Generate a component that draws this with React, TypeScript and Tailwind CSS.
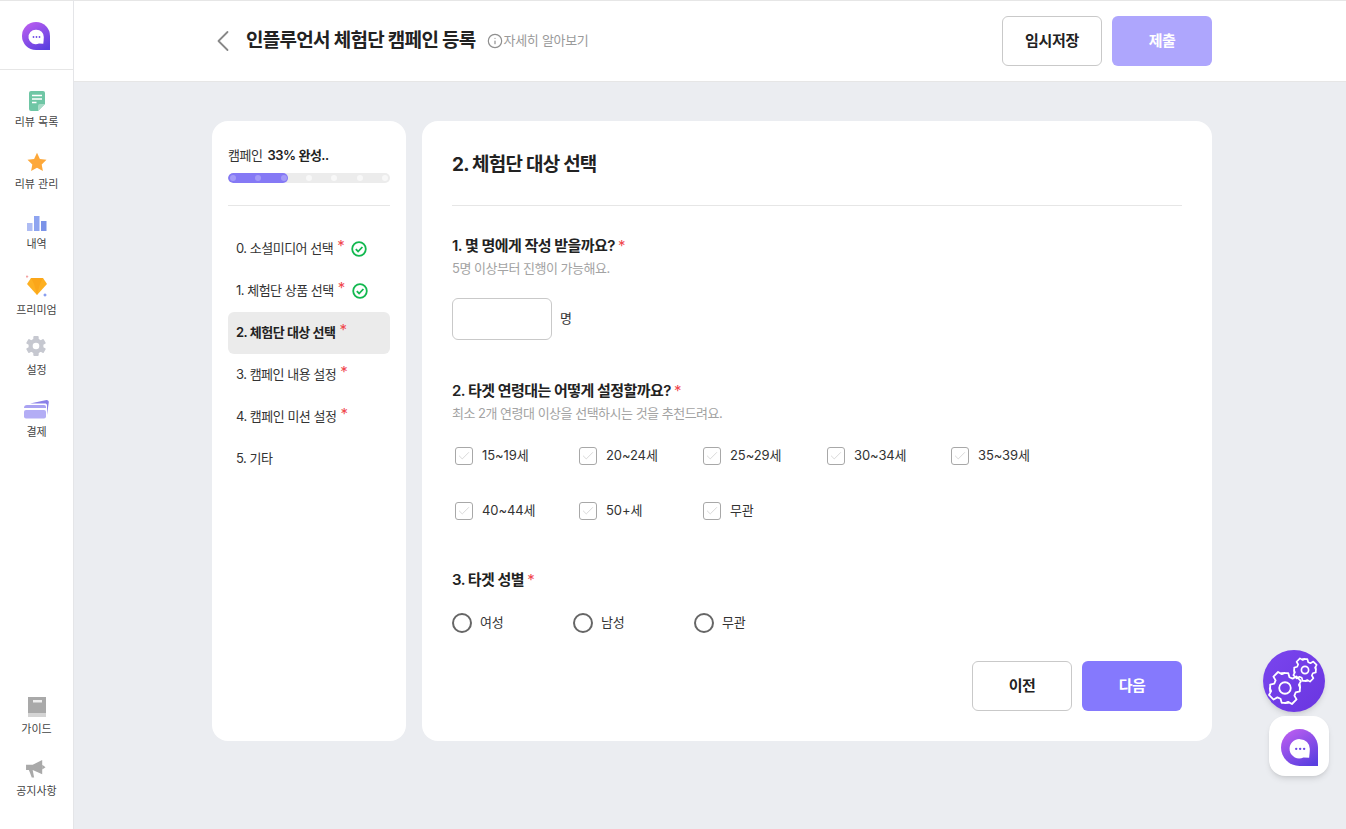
import { ChevronLeft, Info, Check } from 'lucide-react';

// ─── DATA ───

const steps = [
  { label: '0. 소셜미디어 선택', required: true, done: true },
  { label: '1. 체험단 상품 선택', required: true, done: true },
  { label: '2. 체험단 대상 선택', required: true, active: true },
  { label: '3. 캠페인 내용 설정', required: true },
  { label: '4. 캠페인 미션 설정', required: true },
  { label: '5. 기타' },
];

const ageRows = [
  ['15~19세', '20~24세', '25~29세', '30~34세', '35~39세'],
  ['40~44세', '50+세', '무관'],
];

const genders = ['여성', '남성', '무관'];

// ─── ICONS ───

function BrandLogo({ className }: { className?: string }) {
  return (
    <svg viewBox="0 0 28 28" className={className}>
      <defs>
        <linearGradient id="brand" x1="0.2" y1="0" x2="0.8" y2="1">
          <stop offset="0" stopColor="#bb5ef0" />
          <stop offset="1" stopColor="#5a3fe0" />
        </linearGradient>
      </defs>
      <path d="M14 0a14 14 0 0 1 14 14v14H14A14 14 0 0 1 14 0z" fill="url(#brand)" />
      <path d="M14.500 7.700a7.300 7.300 0 0 1 7.300 7.300c0 2.500-.3 4.600-.5 6.800l-4.300-.3a7.300 7.300 0 1 1-2.500-13.800z" fill="#fff" />
      <circle cx="11.500" cy="15" r=".9" fill="#6d4ae6" />
      <circle cx="14.500" cy="15" r=".9" fill="#6d4ae6" />
      <circle cx="17.500" cy="15" r=".9" fill="#6d4ae6" />
    </svg>
  );
}

function NoteIcon() {
  return (
    <svg viewBox="0 0 16 20" className="w-4 h-5 mb-[-1px]">
      <path d="M2 0h12a2 2 0 0 1 2 2v11l-7 7H2a2 2 0 0 1-2-2V2a2 2 0 0 1 2-2z" fill="#6fc6a5" />
      <path d="M16 13h-5a2 2 0 0 0-2 2v5z" fill="#a9dcc8" />
      <path d="M3 4.500h10M3 8h10M3 11.500h4.500" stroke="#fff" strokeWidth="1.600" />
    </svg>
  );
}

function StarIcon() {
  return (
    <svg viewBox="0 0 20 20" className="w-5 h-5">
      <path d="M10 .8l2.900 6.100 6.600.9-4.800 4.600 1.200 6.600L10 15.800 4.100 19l1.200-6.600L.5 7.800l6.600-.9z" fill="#fda83a" />
    </svg>
  );
}

function BarsIcon() {
  return (
    <svg viewBox="0 0 20 15" className="w-5 h-[15px] mb-px">
      <rect x="0" y="7" width="5.500" height="8" fill="#aebcf3" />
      <rect x="7" y="0" width="5.500" height="15" fill="#8ea4f0" />
      <rect x="14" y="5" width="5.500" height="10" fill="#7b93e8" />
    </svg>
  );
}

function GemIcon() {
  return (
    <svg viewBox="0 0 22 23" className="w-[22px] h-[23px]">
      <path d="M5 3h12l4 6-10 11L1 9z" fill="#fdb022" />
      <path d="M5 3l3 6h6l3-6zM8 9l3 11 3-11z" fill="#fba61a" />
      <path d="M1 0l.6 1 1 .6-1 .6-.6 1-.6-1-1-.6 1-.6z" fill="#f4a0a0" />
      <path d="M19 18l.7 1.300 1.300.7-1.300.7-.7 1.300-.7-1.300-1.300-.7 1.300-.7z" fill="#7b93ee" />
    </svg>
  );
}

function CogIcon() {
  return (
    <svg viewBox="0 0 20 20" className="w-5 h-5 mb-[2px] -ml-px">
      <g fill="#c6c8d0">
        <circle cx="10" cy="10" r="7.500" />
        {[0, 60, 120, 180, 240, 300].map((deg) => (
          <rect key={deg} x="7.300" y="0" width="5.400" height="5" rx="1" transform={`rotate(${deg} 10 10)`} />
        ))}
      </g>
      <circle cx="10" cy="10" r="3.300" fill="#fff" />
    </svg>
  );
}

function CardIcon() {
  return (
    <svg viewBox="0 0 25 19" className="w-[25px] h-[19px] mb-px">
      <path d="M6 3.500L22.500 0c1.500 0 2.500 1 2.300 2.300L23 15V5.500C23 4 22 3.500 21 3.500z" fill="#8a80e8" />
      <path d="M0 8a3 3 0 0 1 3-3h17a2 2 0 0 1 2 2v1H0z" fill="#a9a2f2" />
      <rect x="0" y="10" width="22" height="8.500" rx="2" fill="#b3adf5" />
    </svg>
  );
}

function BookIcon() {
  return (
    <svg viewBox="0 0 18 20" className="w-[18px] h-5">
      <rect x="0" y="0" width="18" height="20" fill="#a9a9a9" />
      <rect x="0" y="16" width="18" height="4" fill="#d4d4d4" />
      <rect x="5" y="3" width="9" height="2.500" fill="#eeeeee" />
    </svg>
  );
}

function MegaphoneIcon() {
  return (
    <svg viewBox="0 0 22 20" className="w-[21px] h-[19px]">
      <path d="M0 5h7l10-5v15L7 10.500H0z" fill="#a9a9a9" />
      <path d="M17 5l3.500 2.500L17 10z" fill="#a9a9a9" />
      <path d="M3 10.500h4l1.500 8H6z" fill="#a9a9a9" />
    </svg>
  );
}

function GearsIcon() {
  const gear =
    'M-2-9h4l.7 2.500 1.900.8 2.300-1.300 2.800 2.800-1.300 2.300.8 1.900L9-2v4l-2.500.7-.8 1.900 1.300 2.300-2.800 2.800-2.300-1.300-1.900.8L2 9h-4l-.7-2.500-1.900-.8-2.300 1.300-2.800-2.800 1.300-2.300-.8-1.900L-9 2v-4l2.500-.7.8-1.900-1.300-2.300 2.800-2.800 2.300 1.300 1.900-.8z';
  return (
    <svg viewBox="0 0 62 62" className="w-[62px] h-[62px]">
      <g fill="none" stroke="#fff" strokeLinejoin="round">
        <g transform="translate(22 38) scale(1.650)">
          <path d={gear} strokeWidth="1.100" />
          <circle r="3.500" strokeWidth="1.100" />
        </g>
        <g transform="translate(42 20) scale(1.200)">
          <path d={gear} strokeWidth="1.400" />
          <circle r="3" strokeWidth="1.400" />
        </g>
      </g>
    </svg>
  );
}

function DoneBadge() {
  return (
    <svg viewBox="0 0 16 16" className="w-4 h-4 shrink-0">
      <circle cx="8" cy="8" r="6.800" fill="none" stroke="#12b84f" strokeWidth="1.800" />
      <path d="M4.800 8.200l2.300 2.300 4.300-4.500" fill="none" stroke="#12b84f" strokeWidth="1.800" />
    </svg>
  );
}

// ─── PIECES ───

function NavItem({ icon, label, box }: { icon: React.ReactNode; label: string; box: string }) {
  return (
    <div className={`flex flex-col items-center justify-end ${box}`}>
      {icon}
      <span className="mt-1 text-[11px] leading-[16px] text-[#444]">{label}</span>
    </div>
  );
}

function Asterisk({ className = '' }: { className?: string }) {
  return <span className={`text-[#f0484e] font-normal ${className}`}>*</span>;
}

function AgeCheck({ label }: { label: string }) {
  return (
    <label className="w-[124px] flex items-center h-5">
      <span className="w-[18px] h-[18px] ml-[3px] rounded-[3px] border border-[#a8a8a8] bg-white flex items-center justify-center">
        <Check className="w-3.5 h-3.5 text-[#d4d4d4]" strokeWidth={1.500} />
      </span>
      <span className="ml-[9px] text-[13px] text-[#333] tracking-[-0.1px]">{label}</span>
    </label>
  );
}

function QuestionTitle({ children }: { children: React.ReactNode }) {
  return (
    <div className="text-[15px] leading-[22px] font-semibold text-[#222] tracking-[-0.55px]">
      {children} <Asterisk />
    </div>
  );
}

// ─── PAGE ───

export default function App() {
  return (
    <div className="relative flex h-[829px] w-full overflow-hidden bg-[#ebedf1] font-['Inter','Noto_Sans_CJK_KR',sans-serif]">
      {/* Sidebar */}
      <aside className="w-[74px] shrink-0 flex flex-col bg-white border-r border-[#e4e5e8]">
        <div className="h-[70px] shrink-0 flex items-center justify-center border-b border-t border-[#e6e6e6]">
          <BrandLogo className="w-7 h-7 mt-[2px] -ml-px" />
        </div>
        <NavItem box="h-[60px]" icon={<NoteIcon />} label="리뷰 목록" />
        <NavItem box="h-[62px]" icon={<StarIcon />} label="리뷰 관리" />
        <NavItem box="h-[60px]" icon={<BarsIcon />} label="내역" />
        <NavItem box="h-[66px]" icon={<GemIcon />} label="프리미엄" />
        <NavItem box="h-[60px]" icon={<CogIcon />} label="설정" />
        <NavItem box="h-[62px]" icon={<CardIcon />} label="결제" />
        <div className="flex-1" />
        <NavItem box="h-[40px]" icon={<BookIcon />} label="가이드" />
        <NavItem box="h-[62px] mb-[30px]" icon={<MegaphoneIcon />} label="공지사항" />
      </aside>

      <div className="flex-1 min-w-0 flex flex-col">
        {/* Header */}
        <header className="h-[82px] shrink-0 bg-white border-t border-b border-[#e6e6e6] pl-[138px] pr-[134px] flex items-center">
          <ChevronLeft className="w-9 h-9 -ml-[7px] text-[#888]" strokeWidth={1.200} />
          <h1 className="ml-[5px] text-[19px] font-bold text-[#222] tracking-[-0.7px]">인플루언서 체험단 캠페인 등록</h1>
          <Info className="ml-[11px] w-4 h-4 text-[#8f8f8f]" strokeWidth={1.800} />
          <span className="ml-[1px] text-[13px] text-[#9a9a9a] tracking-[-0.3px]">자세히 알아보기</span>
          <div className="ml-auto flex gap-[10px]">
            <button className="w-[100px] h-[50px] rounded-[6px] border border-[#c9c9c9] bg-white text-[15px] font-semibold text-[#222] tracking-[-0.3px]">
              임시저장
            </button>
            <button className="w-[100px] h-[50px] rounded-[6px] bg-[#aea6fd] text-[15px] font-semibold text-white tracking-[-0.5px]">
              제출
            </button>
          </div>
        </header>

        {/* Content */}
        <main className="flex gap-4 pl-[138px] pt-[39px]">
          {/* Steps */}
          <section className="w-[194px] h-[620px] bg-white rounded-[16px] px-4 pt-[24px]">
            <div className="text-[13px] leading-5 text-[#333] tracking-[-0.5px]">
              캠페인 <span className="ml-[2px] font-semibold text-[#222]">33% 완성..</span>
            </div>
            <div className="relative mt-[8px] h-[10px] rounded-full bg-[#ececec] overflow-hidden">
              <div className="h-full w-[60px] rounded-full bg-[#8579f5]" />
              <div className="absolute inset-0 flex justify-between items-center px-[2px]">
                {[0, 1, 2, 3, 4, 5, 6].map((i) => (
                  <span key={i} className={`w-[6px] h-[6px] rounded-full ${i < 3 ? 'bg-[#a49bf8]' : 'bg-[#f8f8f8]'}`} />
                ))}
              </div>
            </div>
            <div className="mt-[22px] h-px bg-[#e6e6e6]" />
            <ul className="mt-[22px] flex flex-col">
              {steps.map((step) => (
                <li
                  key={step.label}
                  className={`h-[42px] px-2 flex items-center rounded-[6px] text-[13px] tracking-[-0.5px] ${
                    step.active ? 'bg-[#ebebeb] font-semibold text-[#222]' : 'text-[#333]'
                  }`}
                >
                  <span>{step.label}</span>
                  {step.required && <Asterisk className="ml-1 -mt-[6px] text-[15px]" />}
                  {step.done && (
                    <span className="ml-[7px]">
                      <DoneBadge />
                    </span>
                  )}
                </li>
              ))}
            </ul>
          </section>

          {/* Form */}
          <section className="w-[790px] h-[620px] bg-white rounded-[16px] px-[30px]">
            <h2 className="pt-[30px] pb-[26px] text-[19px] leading-[28px] font-bold text-[#222] tracking-[-0.75px] border-b border-[#e6e6e6]">
              2. 체험단 대상 선택
            </h2>

            <div className="mt-[29px]">
              <QuestionTitle>1. 몇 명에게 작성 받을까요?</QuestionTitle>
              <p className="mt-[2px] text-[13px] leading-[18px] text-[#a3a3a3] tracking-[-0.5px]">5명 이상부터 진행이 가능해요.</p>
              <div className="mt-[21px] flex items-center">
                <input className="w-[100px] h-[42px] rounded-[6px] border border-[#c9c9c9] bg-white" />
                <span className="ml-2 text-[13px] text-[#333]">명</span>
              </div>
            </div>

            <div className="mt-[40px]">
              <QuestionTitle>2. 타겟 연령대는 어떻게 설정할까요?</QuestionTitle>
              <p className="mt-[2px] text-[13px] leading-[18px] text-[#a3a3a3] tracking-[-0.5px]">최소 2개 연령대 이상을 선택하시는 것을 추천드려요.</p>
              <div className="mt-[24px] flex flex-col gap-[35px]">
                {ageRows.map((row) => (
                  <div key={row[0]} className="flex">
                    {row.map((age) => (
                      <AgeCheck key={age} label={age} />
                    ))}
                  </div>
                ))}
              </div>
            </div>

            <div className="mt-[48px]">
              <QuestionTitle>3. 타겟 성별</QuestionTitle>
              <div className="mt-[22px] flex">
                {genders.map((g) => (
                  <label key={g} className="w-[121px] flex items-center">
                    <span className="w-5 h-5 rounded-full border-2 border-[#666] bg-white" />
                    <span className="ml-[8px] text-[13px] text-[#333] tracking-[-0.3px]">{g}</span>
                  </label>
                ))}
              </div>
            </div>

            <div className="mt-[28px] flex justify-end gap-[10px]">
              <button className="w-[100px] h-[50px] rounded-[6px] border border-[#c9c9c9] bg-white text-[15px] font-semibold text-[#222] tracking-[-0.5px]">
                이전
              </button>
              <button className="w-[100px] h-[50px] rounded-[6px] bg-[#8579fd] text-[15px] font-semibold text-white tracking-[-0.5px]">
                다음
              </button>
            </div>
          </section>
        </main>
      </div>

      {/* Floating buttons */}
      <div className="absolute left-[1263px] top-[650px] w-[62px] h-[62px] rounded-full bg-gradient-to-br from-[#7a45ee] to-[#6a35e0] shadow-md">
        <GearsIcon />
      </div>
      <div className="absolute left-[1269px] top-[716px] w-[60px] h-[60px] rounded-[16px] bg-white shadow-md flex items-center justify-center">
        <BrandLogo className="w-[37px] h-[37px] mt-[3px]" />
      </div>
    </div>
  );
}
